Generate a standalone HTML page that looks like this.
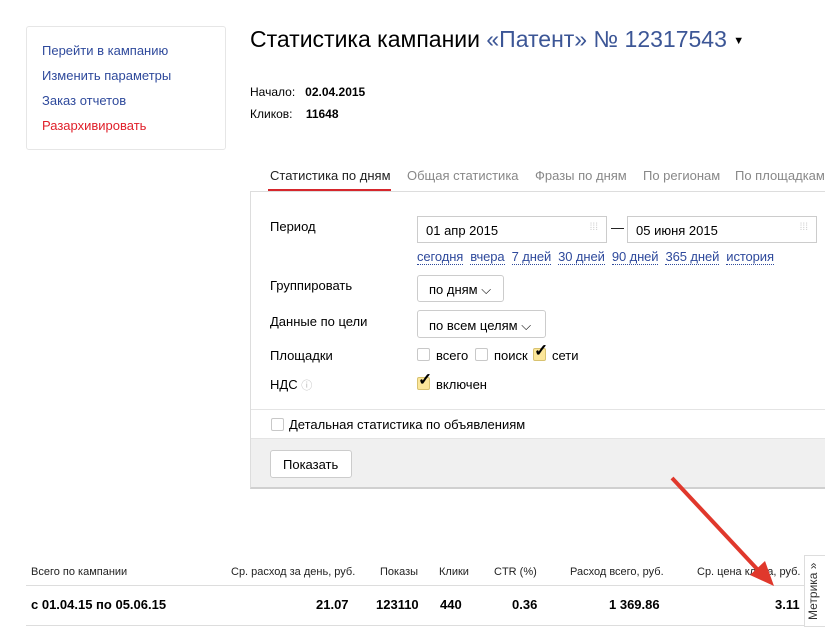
<!DOCTYPE html><html><head><meta charset="utf-8"><style>
*{margin:0;padding:0;box-sizing:border-box}
body{width:825px;height:632px;overflow:hidden;background:#fff;font-family:"Liberation Sans",sans-serif;font-size:13px;color:#000;position:relative}
.a{position:absolute;white-space:nowrap}
.side{left:26px;top:26px;width:200px;height:124px;border:1px solid #e6e6e6;border-radius:3px}
.side div{position:absolute;left:15px;font-size:13px;color:#2f4a9c}
.tab{top:168px;font-size:13px;color:#888}
.inp{height:27px;border:1px solid #ccc;font-size:13px;padding:6px 8px}
.lnk{color:#2f4a9c;border-bottom:1px dotted #2f4a9c;line-height:14px}
.btn{border:1px solid #ccc;border-radius:3px;font-size:13px;background:#fff}
.cb{width:13px;height:13px;border:1px solid #c8c8c8;border-radius:2px}
.cbon{width:13px;height:13px;border:1px solid #d8c270;background:#fbe69a;border-radius:2px}
.th{top:566px;font-size:11px;color:#222}
.td{top:597px;font-size:13px;font-weight:bold}
</style></head><body>
<div class="a side">
<div style="top:16px">Перейти в кампанию</div>
<div style="top:41px">Изменить параметры</div>
<div style="top:66px">Заказ отчетов</div>
<div style="top:91px;color:#e0202a">Разархивировать</div>
</div>
<div class="a" style="left:250px;top:26px;font-size:23px">Статистика кампании <span style="color:#3c5696">«Патент» № 12317543</span> <span style="font-size:11px;vertical-align:3px">▼</span></div>
<div class="a" style="left:250px;top:85px;font-size:12px">Начало:&nbsp;&nbsp; <b>02.04.2015</b></div>
<div class="a" style="left:250px;top:107px;font-size:12px">Кликов:&nbsp;&nbsp;&nbsp; <b>11648</b></div>
<div class="a tab" style="left:270px;color:#222">Статистика по дням</div>
<div class="a" style="left:268px;top:189px;width:123px;height:2px;background:#d6262c"></div>
<div class="a tab" style="left:407px">Общая статистика</div>
<div class="a tab" style="left:535px">Фразы по дням</div>
<div class="a tab" style="left:643px">По регионам</div>
<div class="a tab" style="left:735px">По площадкам</div>
<div class="a" style="left:250px;top:191px;width:580px;height:298px;border:1px solid #ddd;border-bottom:2px solid #d0d0d0"></div>
<div class="a" style="left:251px;top:438px;width:580px;height:49px;background:#f0f0f0;border-top:1px solid #e4e4e4"></div>
<div class="a" style="left:251px;top:409px;width:580px;height:1px;background:#e4e4e4"></div>
<div class="a" style="left:270px;top:219px">Период</div>
<div class="a inp" style="left:417px;top:216px;width:190px">01 апр 2015<span style="position:absolute;right:8px;top:5px;color:#ccc;font-size:10px">⁞⁞⁞</span></div>
<div class="a" style="left:611px;top:220px">—</div>
<div class="a inp" style="left:627px;top:216px;width:190px">05 июня 2015<span style="position:absolute;right:8px;top:5px;color:#ccc;font-size:10px">⁞⁞⁞</span></div>
<div class="a" style="left:417px;top:249px;font-size:13px;letter-spacing:-0.1px"><span class="lnk">сегодня</span>&nbsp; <span class="lnk">вчера</span>&nbsp; <span class="lnk">7 дней</span>&nbsp; <span class="lnk">30 дней</span>&nbsp; <span class="lnk">90 дней</span>&nbsp; <span class="lnk">365 дней</span>&nbsp; <span class="lnk">история</span></div>
<div class="a" style="left:270px;top:278px">Группировать</div>
<div class="a btn" style="left:417px;top:275px;width:87px;height:27px;padding:6px 11px">по дням ⌵</div>
<div class="a" style="left:270px;top:314px">Данные по цели</div>
<div class="a btn" style="left:417px;top:310px;width:129px;height:28px;padding:7px 11px">по всем целям ⌵</div>
<div class="a" style="left:270px;top:348px">Площадки</div>
<div class="a cb" style="left:417px;top:348px"></div><div class="a" style="left:436px;top:348px">всего</div>
<div class="a cb" style="left:475px;top:348px"></div><div class="a" style="left:494px;top:348px">поиск</div>
<div class="a cbon" style="left:533px;top:348px"></div><div class="a" style="left:534px;top:341px;font-size:17px;font-weight:bold">✓</div><div class="a" style="left:552px;top:348px">сети</div>
<div class="a" style="left:270px;top:377px">НДС <span style="color:#bbb;font-size:11px">ⓘ</span></div>
<div class="a cbon" style="left:417px;top:377px"></div><div class="a" style="left:418px;top:370px;font-size:17px;font-weight:bold">✓</div><div class="a" style="left:436px;top:377px">включен</div>
<div class="a cb" style="left:271px;top:418px"></div><div class="a" style="left:289px;top:417px">Детальная статистика по объявлениям</div>
<div class="a btn" style="left:270px;top:450px;width:82px;height:28px;padding:6px 12px">Показать</div>
<div class="a th" style="left:31px">Всего по кампании</div>
<div class="a th" style="left:231px">Ср. расход за день, руб.</div>
<div class="a th" style="left:380px">Показы</div>
<div class="a th" style="left:439px">Клики</div>
<div class="a th" style="left:494px">CTR (%)</div>
<div class="a th" style="left:570px">Расход всего, руб.</div>
<div class="a th" style="left:697px">Ср. цена клика, руб.</div>
<div class="a" style="left:26px;top:585px;width:780px;height:1px;background:#ddd"></div>
<div class="a" style="left:26px;top:625px;width:780px;height:1px;background:#ddd"></div>
<div class="a td" style="left:31px">с 01.04.15 по 05.06.15</div>
<div class="a td" style="left:316px">21.07</div>
<div class="a td" style="left:376px">123110</div>
<div class="a td" style="left:440px">440</div>
<div class="a td" style="left:512px">0.36</div>
<div class="a td" style="left:609px">1 369.86</div>
<div class="a td" style="left:775px">3.11</div>
<div class="a" style="left:804px;top:555px;width:22px;height:72px;border:1px solid #ddd;background:#fff"></div>
<div class="a" style="left:806px;top:620px;transform:rotate(-90deg);transform-origin:0 0;font-size:12px;color:#333">Метрика »</div>
<svg class="a" style="left:0;top:0" width="825" height="632"><line x1="672" y1="478" x2="758" y2="570" stroke="#e0382c" stroke-width="4"/><polygon points="774,586 750,575 765,561" fill="#e0382c"/></svg>
</body></html>
